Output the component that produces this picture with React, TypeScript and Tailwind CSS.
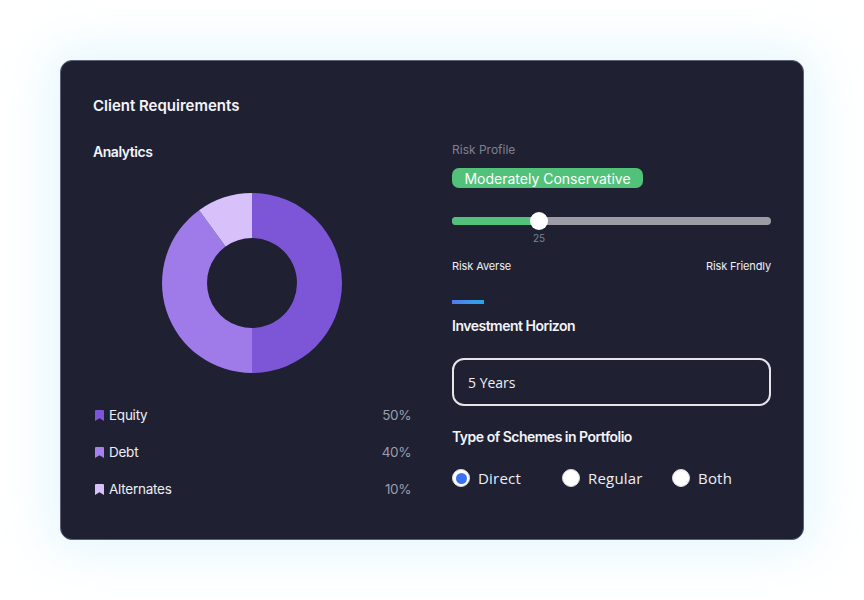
import React from "react";

const Bookmark = ({ color }: { color: string }) => (
  <svg width="9" height="11" viewBox="0 0 9 11">
    <path d="M1 0 H8 A1 1 0 0 1 9 1 V11 L4.5 8.2 L0 11 V1 A1 1 0 0 1 1 0 Z" fill={color} />
  </svg>
);

const Donut = () => (
  <svg width="180" height="180" viewBox="0 0 180 180">
    <path d="M90 0 A90 90 0 0 1 90 180 L90 135 A45 45 0 0 0 90 45 Z" fill="#7d56d8" />
    <path d="M90 180 A90 90 0 0 1 37.1 17.2 L63.55 53.6 A45 45 0 0 0 90 135 Z" fill="#9f7bea" />
    <path d="M37.1 17.2 A90 90 0 0 1 90 0 L90 45 A45 45 0 0 0 63.55 53.6 Z" fill="#d8c0fa" />
  </svg>
);

const Radio = ({ label, checked }: { label: string; checked?: boolean }) => (
  <div className="flex w-[110px] shrink-0 items-center gap-[8px]">
    <div className="flex h-[18px] w-[18px] items-center justify-center rounded-full border border-[#d9d9e0] bg-white">
      {checked && <div className="h-[11px] w-[11px] rounded-full bg-[#3d6ff2]" />}
    </div>
    <span className="text-[15px] leading-[20px] tracking-[0.2px] text-[#eeeef4] [font-family:'Open_Sans',sans-serif]">{label}</span>
  </div>
);

export default function App() {
  const legend = [
    { name: "Equity", pct: "50%", color: "#7d56d8" },
    { name: "Debt", pct: "40%", color: "#a580ee" },
    { name: "Alternates", pct: "10%", color: "#d8c0fa" },
  ];
  return (
    <div className="flex h-[600px] w-[864px] items-center justify-center bg-white [font-family:Inter,sans-serif]">
      <div className="h-[480px] w-[744px] rounded-[12px] border border-[#5e6178] bg-[#1f2133] px-[32px] pt-[35px] shadow-[0_0_50px_12px_rgba(200,238,252,0.45)]">
        <div className="text-[15px] font-semibold leading-[20px] text-[#f4f4f8]">Client Requirements</div>
        <div className="mt-[26px] grid grid-cols-[318px_319px] gap-x-[41px]">
          {/* Left column */}
          <div className="flex flex-col">
            <div className="mt-[1px] text-[14px] font-semibold leading-[18px] tracking-[-0.45px] text-[#f4f4f8]">Analytics</div>
            <div className="mt-[32px] flex justify-center">
              <Donut />
            </div>
            <div className="mt-[32px] flex flex-col gap-[17px]">
              {legend.map((l) => (
                <div key={l.name} className="flex h-[20px] items-center justify-between">
                  <div className="flex items-center gap-[5px] pl-[2px]">
                    <Bookmark color={l.color} />
                    <span className="text-[13.5px] tracking-[-0.25px] text-[#eeeef4]">{l.name}</span>
                  </div>
                  <span className="text-[13.5px] tracking-[-0.4px] text-[#9c9dab]">{l.pct}</span>
                </div>
              ))}
            </div>
          </div>
          {/* Right column */}
          <div className="flex flex-col">
            <div className="text-[12px] leading-[16px] text-[#7e8092]">Risk Profile</div>
            <div className="mt-[10px] flex h-[20px] w-[191px] items-center justify-center rounded-[7px] bg-[#52c27a] text-[14px] text-white">
              Moderately Conservative
            </div>
            <div className="relative mt-[23px] h-[20px]">
              <div className="absolute left-0 right-0 top-[6px] flex h-[8px] overflow-hidden rounded-full bg-[#9d9ca5]">
                <div className="h-full w-[87px] bg-[#52c27a]" />
              </div>
              <div className="absolute left-[78px] top-[1px] h-[18px] w-[18px] rounded-full bg-white" />
            </div>
            <div className="ml-[80px] mt-[1px] w-[14px] text-center text-[10px] leading-[12px] text-[#7e8092]">25</div>
            <div className="mt-[14px] flex justify-between text-[11px] leading-[16px] tracking-[-0.1px] text-[#eeeef4]">
              <span>Risk Averse</span>
              <span>Risk Friendly</span>
            </div>
            <div className="mt-[26px] h-[4px] w-[32px] bg-gradient-to-r from-[#4f7cf0] to-[#1ea9e6]" />
            <div className="mt-[13px] text-[14px] font-semibold leading-[18px] tracking-[-0.5px] text-[#f4f4f8]">Investment Horizon</div>
            <div className="mt-[23px] flex h-[48px] items-center rounded-[12px] border-2 border-[#e6e6ea] px-[14px]">
              <span className="text-[14px] text-[#eeeef4] [font-family:'Open_Sans',sans-serif]">5 Years</span>
            </div>
            <div className="mt-[22px] text-[14px] font-semibold leading-[18px] tracking-[-0.5px] text-[#f4f4f8]">Type of Schemes in Portfolio</div>
            <div className="mt-[22px] flex">
              <Radio label="Direct" checked />
              <Radio label="Regular" />
              <Radio label="Both" />
            </div>
          </div>
        </div>
      </div>
    </div>
  );
}
